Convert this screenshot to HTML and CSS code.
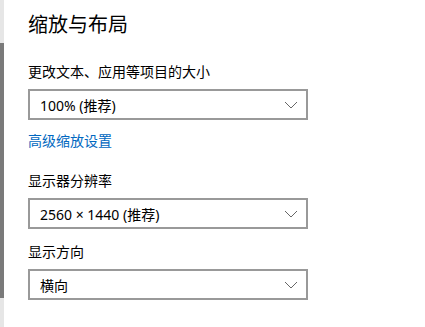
FILE: index.html
```html
<!DOCTYPE html>
<html lang="zh-CN">
<head>
  <meta charset="UTF-8">
  <title>缩放与布局</title>
  <link rel="stylesheet" href="styles.css">
</head>
<body>
<div class="page">
  <div class="edge"><div class="thumb"></div></div>
  <div class="content">
    <h1>缩放与布局</h1>

    <p class="label">更改文本、应用等项目的大小</p>
    <div class="select">
      <span>100% (推荐)</span>
      <svg class="chevron" width="14" height="8" viewBox="0 0 14 8"><path d="M1 1 L7 7 L13 1" fill="none" stroke="#666" stroke-width="1"/></svg>
    </div>

    <a class="link" href="#">高级缩放设置</a>

    <p class="label">显示器分辨率</p>
    <div class="select">
      <span>2560 × 1440 (推荐)</span>
      <svg class="chevron" width="14" height="8" viewBox="0 0 14 8"><path d="M1 1 L7 7 L13 1" fill="none" stroke="#666" stroke-width="1"/></svg>
    </div>

    <p class="label label-tight">显示方向</p>
    <div class="select">
      <span>横向</span>
      <svg class="chevron" width="14" height="8" viewBox="0 0 14 8"><path d="M1 1 L7 7 L13 1" fill="none" stroke="#666" stroke-width="1"/></svg>
    </div>
  </div>
</div>
</body>
</html>
```

FILE: styles.css
```css
* {
  box-sizing: border-box;
  font-family: "Noto Sans", "Noto Sans CJK SC", sans-serif;
}
html, body {
  margin: 0;
  padding: 0;
  background: #fff;
  color: #000;
}
.page {
  display: flex;
  height: 327px;
}
.edge {
  width: 4px;
  background: #e6e6e6;
  flex-shrink: 0;
}
.thumb {
  margin-top: 43px;
  height: 255px;
  background: #7a7a7a;
}
.content {
  padding: 10px 0 0 24px;
}
h1 {
  margin: 0;
  font-size: 20px;
  font-weight: normal;
  line-height: 30px;
}
.label {
  margin: 22px 0 0;
  font-size: 14px;
  line-height: 20px;
}
.label-tight {
  margin-top: 13px;
}
.select {
  display: flex;
  align-items: center;
  justify-content: space-between;
  width: 280px;
  height: 31px;
  margin-top: 7px;
  padding: 0 8px 0 10px;
  border: 2px solid #999;
  font-size: 14px;
}
.chevron {
  display: block;
}
.link {
  display: block;
  margin-top: 11px;
  color: #0067c0;
  text-decoration: none;
  font-size: 14px;
  line-height: 20px;
}
.link + .label {
  margin-top: 20px;
}
```
